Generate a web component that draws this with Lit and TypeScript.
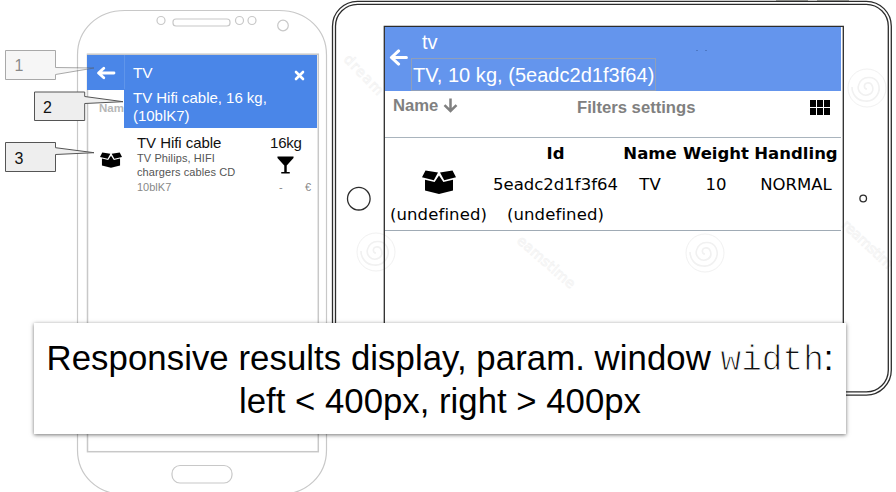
import { LitElement, html, svg, css } from "lit";
import { customElement } from "lit/decorators.js";

const boxIcon = html`<svg class="box" viewBox="0 0 34 24">
  <path d="M3.5 .5 L16 2.4 L11.8 10.2 L0 7.2 Z M30.5 .5 L18 2.4 L22.2 10.2 L34 7.2 Z M3 9.8 L12.6 12 L17 5.5 L21.4 12 L31 9.8 V20.5 L17 24 L3 20.5 Z"/>
</svg>`;

const backArrow = html`<svg class="back" viewBox="0 0 19 17">
  <path d="M17.4 8.5 H3 M9.6 1.9 L2.4 8.5 L9.6 15.1" fill="none" stroke="#fff" stroke-width="3" stroke-linecap="round" stroke-linejoin="round"/>
</svg>`;

const slimArrow = html`<svg class="back" viewBox="0 0 20 14">
  <path d="M18 7 H3 M7.8 2.2 L2.5 7 L7.8 11.8" fill="none" stroke="#fff" stroke-width="2.8" stroke-linecap="round" stroke-linejoin="round"/>
</svg>`;

const swirl = (x: number, y: number) => svg`<g transform="translate(${x} ${y})" fill="none" stroke="#f1f1f1">
  <circle r="19"/>
  <path d="M0 1 C-3 1 -4 -4 0 -5 C6 -6 8 3 3 6 C-4 10 -11 3 -8 -4 C-5 -12 7 -13 11 -5 C15 4 8 14 -2 13 C-10 13 -15 6 -15 -1" stroke-width="1.6"/>
</g>`;

@customElement("phone-results")
export class PhoneResults extends LitElement {
  static styles = css`
    :host { display: block; font-family: "Liberation Sans", sans-serif; }
    .bar { display: grid; grid-template-columns: 37px 1fr 36px; height: 35px; background: #4a86e8; color: #fff; align-items: center; font-size: 15.5px; line-height: 35px; }
    .back { width: 20px; height: 14px; display: block; margin: 0 0 0 9px; }
    .query { padding-left: 8px; border-left: 1px solid #5f95ea; box-sizing: border-box; letter-spacing: -.3px; }
    .close { width: 11px; height: 11px; margin: 5px 0 0 13px; display: block; }
    .below { display: grid; grid-template-columns: 37px 1fr; height: 38px; }
    .sort { overflow: hidden; padding: 12px 0 0 12px; color: #b7b7b7; font: bold 11.5px/13px "Liberation Sans", sans-serif; }
    .hint { background: #4a86e8; color: #fff; font-size: 15px; line-height: 18px; padding: 0 0 3px 9px; height: 36px; letter-spacing: -.02px; white-space: nowrap; margin-top: -1px; }
    .row { display: grid; grid-template-columns: 50px 1fr 32px 15px; padding-top: 6px; }
    .box { width: 22px; height: 16px; margin: 18px 0 0 13px; }
    .title { font-size: 15px; line-height: 18px; color: #111; letter-spacing: -.05px; white-space: nowrap; }
    .desc { font-size: 11px; line-height: 14px; color: #555; margin-top: -1px; letter-spacing: .1px; white-space: nowrap; }
    .code { font-size: 11px; line-height: 14px; color: #888; margin-top: 1px; }
    .weight { font-size: 15px; line-height: 18px; color: #111; letter-spacing: -.2px; }
    .glass { width: 17px; height: 18px; display: block; margin: 4px 0 0 7px; }
    .dash { font-size: 11px; line-height: 14px; color: #888; padding: 6px 0 0 9px; }
    .euro { font-size: 11px; line-height: 14px; color: #888; padding: 46px 0 0 3px; }
  `;
  render() {
    return html`
      <div class="bar">
        ${slimArrow}
        <div class="query">TV</div>
        <svg class="close" viewBox="0 0 11 11"><path d="M2 2 L9 9 M9 2 L2 9" stroke="#fff" stroke-width="2.6" stroke-linecap="round"/></svg>
      </div>
      <div class="below">
        <div class="sort">Name</div>
        <div class="hint">TV Hifi cable, 16 kg,<br />(10blK7)</div>
      </div>
      <div class="row">
        <div>${boxIcon}</div>
        <div>
          <div class="title">TV Hifi cable</div>
          <div class="desc">TV Philips, HIFI<br />chargers cables CD</div>
          <div class="code">10blK7</div>
        </div>
        <div>
          <div class="weight">16kg</div>
          <svg class="glass" viewBox="0 0 18 18"><path d="M.5 0 H17.5 V1.5 L10.3 9.5 V16.5 H13.5 V18 H4.5 V16.5 H7.7 V9.5 L.5 1.5 Z"/></svg>
          <div class="dash">-</div>
        </div>
        <div class="euro">€</div>
      </div>`;
  }
}

@customElement("tablet-results")
export class TabletResults extends LitElement {
  static styles = css`
    :host { display: block; font-family: "Liberation Sans", sans-serif; }
    .bar { height: 64px; background: #6495ed; color: #fff; display: grid; grid-template-columns: 26px 1fr; font-size: 20px; }
    .back { width: 19px; height: 17px; display: block; margin: 22px 0 0 4px; }
    .query { line-height: 31px; height: 31px; padding-left: 11px; }
    .match { display: inline-block; box-sizing: border-box; border: 1px solid #8f9fba; height: 33px; width: 245px; line-height: 32px; padding-left: 1px; letter-spacing: .03px; white-space: nowrap; }
    .tools { display: flex; height: 46px; color: #808080; font-weight: bold; font-size: 16.67px; line-height: 19px; }
    .name { padding: 5px 0 0 8px; width: 49px; }
    .down { width: 15px; height: 15px; margin: 7px 0 0 1px; }
    .filters { margin: 7px 0 0 119px; white-space: nowrap; }
    .tiles { width: 20px; height: 15px; margin: 9px 11px 0 auto; }
    .table { display: grid; grid-template-columns: 107px 127px 62px 70px 90px; grid-template-rows: 31px 30px 30px; border-top: 1px solid #a9b4bd; border-bottom: 1px solid #a0abb5; height: 92px; text-align: center; font: 16.5px/31px "DejaVu Sans", sans-serif; color: #000; white-space: nowrap; }
    .table > div { display: flex; justify-content: center; }
    .head { font-weight: bold; }
    .none { letter-spacing: .12px; }
    .box { width: 34px; height: 24px; margin-top: 1px; }
  `;
  render() {
    return html`
      <div class="bar">
        ${backArrow}
        <div><div class="query">tv</div><div class="match">TV, 10 kg, (5eadc2d1f3f64)</div></div>
      </div>
      <div class="tools">
        <div class="name">Name</div>
        <svg class="down" viewBox="0 0 15 15"><path d="M7.5 .5 V13 M1.5 7.2 L7.5 13 L13.5 7.2" fill="none" stroke="#808080" stroke-width="2.5"/></svg>
        <div class="filters">Filters settings</div>
        <svg class="tiles" viewBox="0 0 20 15">
          ${[0, 7, 14].map((x) => [0, 8].map((y) => svg`<rect x=${x} y=${y} width="6" height="7"/>`))}
        </svg>
      </div>
      <div class="table">
        <div></div>
        ${["Id", "Name", "Weight", "Handling"].map((t) => html`<div class="head">${t}</div>`)}
        <div>${boxIcon}</div>
        ${["5eadc2d1f3f64", "TV", "10", "NORMAL"].map((t) => html`<div>${t}</div>`)}
        <div class="none">(undefined)</div><div class="none">(undefined)</div>
      </div>`;
  }
}

@customElement("app-root")
export class AppRoot extends LitElement {
  static styles = css`
    :host { display: block; position: relative; width: 896px; height: 492px; overflow: hidden; background: #fff; }
    .frames, .callouts { position: absolute; left: 0; top: 0; width: 896px; height: 492px; }
    .mark { font: 14px "DejaVu Sans", sans-serif; fill: none; stroke: #f3f3f3; stroke-width: .8; }
    .label { font: 16px "Liberation Sans", sans-serif; fill: #111; }
    .faint { opacity: .5; }
    .phone { position: absolute; left: 87px; top: 55px; width: 230px; }
    .tablet { position: absolute; left: 385px; top: 27px; width: 456px; }
    .caption { position: absolute; left: 34px; top: 323px; width: 812px; height: 111px; box-sizing: border-box; padding-top: 15px; background: #fff; box-shadow: 0 1px 4px rgba(0,0,0,.55); text-align: center; font: 34.75px/41.3px "Liberation Sans", sans-serif; color: #000; white-space: nowrap; }
    .lead { letter-spacing: .06px; }
    .code { font-family: "Liberation Mono", monospace; font-size: 34.4px; letter-spacing: 0; color: #111; -webkit-text-stroke: 1px #fff; }
  `;
  render() {
    return html`
      <svg class="frames" viewBox="0 0 896 492" fill="none">
        <g stroke="#c8c8c8" stroke-width="1.2">
          <path d="M77.5 55 C77.5 30 97 10.5 125 10.5 H279 C307 10.5 326.5 30 326.5 55 V450 C326.5 475 307 494.5 279 494.5 H125 C97 494.5 77.5 475 77.5 450 Z"/>
          <rect x="87.5" y="54.2" width="230.8" height="397.5" stroke-width="1.5"/>
          <circle cx="161" cy="20.5" r="4"/><circle cx="239.5" cy="20.5" r="4"/><circle cx="252" cy="20.5" r="4"/><circle cx="283" cy="25.5" r="5.3"/>
          <rect x="173" y="19" width="57" height="7" rx="3"/>
          <rect x="172" y="465.5" width="60" height="17.5" rx="8"/>
        </g>
        <path d="M776 .5 H808 M817 .5 H849" stroke="#a8aaa4"/>
        ${swirl(376, 252)}${swirl(705, 253)}${swirl(867, 88)}
        <text class="mark" transform="translate(343 60) rotate(46)" textLength="50">dream</text>
        <text class="mark" transform="translate(516 242) rotate(41)" textLength="72">eamstime</text>
        <text class="mark" transform="translate(841 226) rotate(43)" textLength="64">reamstim</text>
        <g stroke="#2c2c2c" stroke-width="1.3">
          <rect x="332.5" y="1.3" width="558.8" height="393.8" rx="25"/>
          <rect x="335.5" y="4.3" width="552.8" height="387.6" rx="22"/>
          <path d="M384.3 360 V26.3 H843.3 V360"/>
          <circle cx="358.8" cy="198.7" r="11.3"/><circle cx="863.2" cy="198.5" r="3.3"/>
        </g>
      </svg>
      <phone-results class="phone"></phone-results>
      <tablet-results class="tablet"></tablet-results>
      <svg class="callouts" viewBox="0 0 896 492" fill="#eee" stroke="#555" stroke-width="1">
        <path d="M696 50.5 H698 M705 50.5 H707" stroke="#4d78c4"/>
        <g class="faint"><path d="M5.5 50.5 H55.5 V67.5 L94 68 L55.5 74.5 V79.5 H5.5 Z"/><text class="label" stroke="none" x="14.5" y="71">1</text></g>
        <path d="M34.5 92 H84.7 V96.5 L123 101.7 L84.7 103.5 V120.5 H34.5 Z"/><text class="label" stroke="none" x="43" y="113">2</text>
        <path d="M5.5 142.5 H55.5 V147.7 L94 152.7 L55.5 154.5 V171.5 H5.5 Z"/><text class="label" stroke="none" x="14.5" y="163.7">3</text>
      </svg>
      <div class="caption"><span class="lead">Responsive results display, param. window </span><span class="code">width</span>:<br />left &lt; 400px, right &gt; 400px</div>`;
  }
}
